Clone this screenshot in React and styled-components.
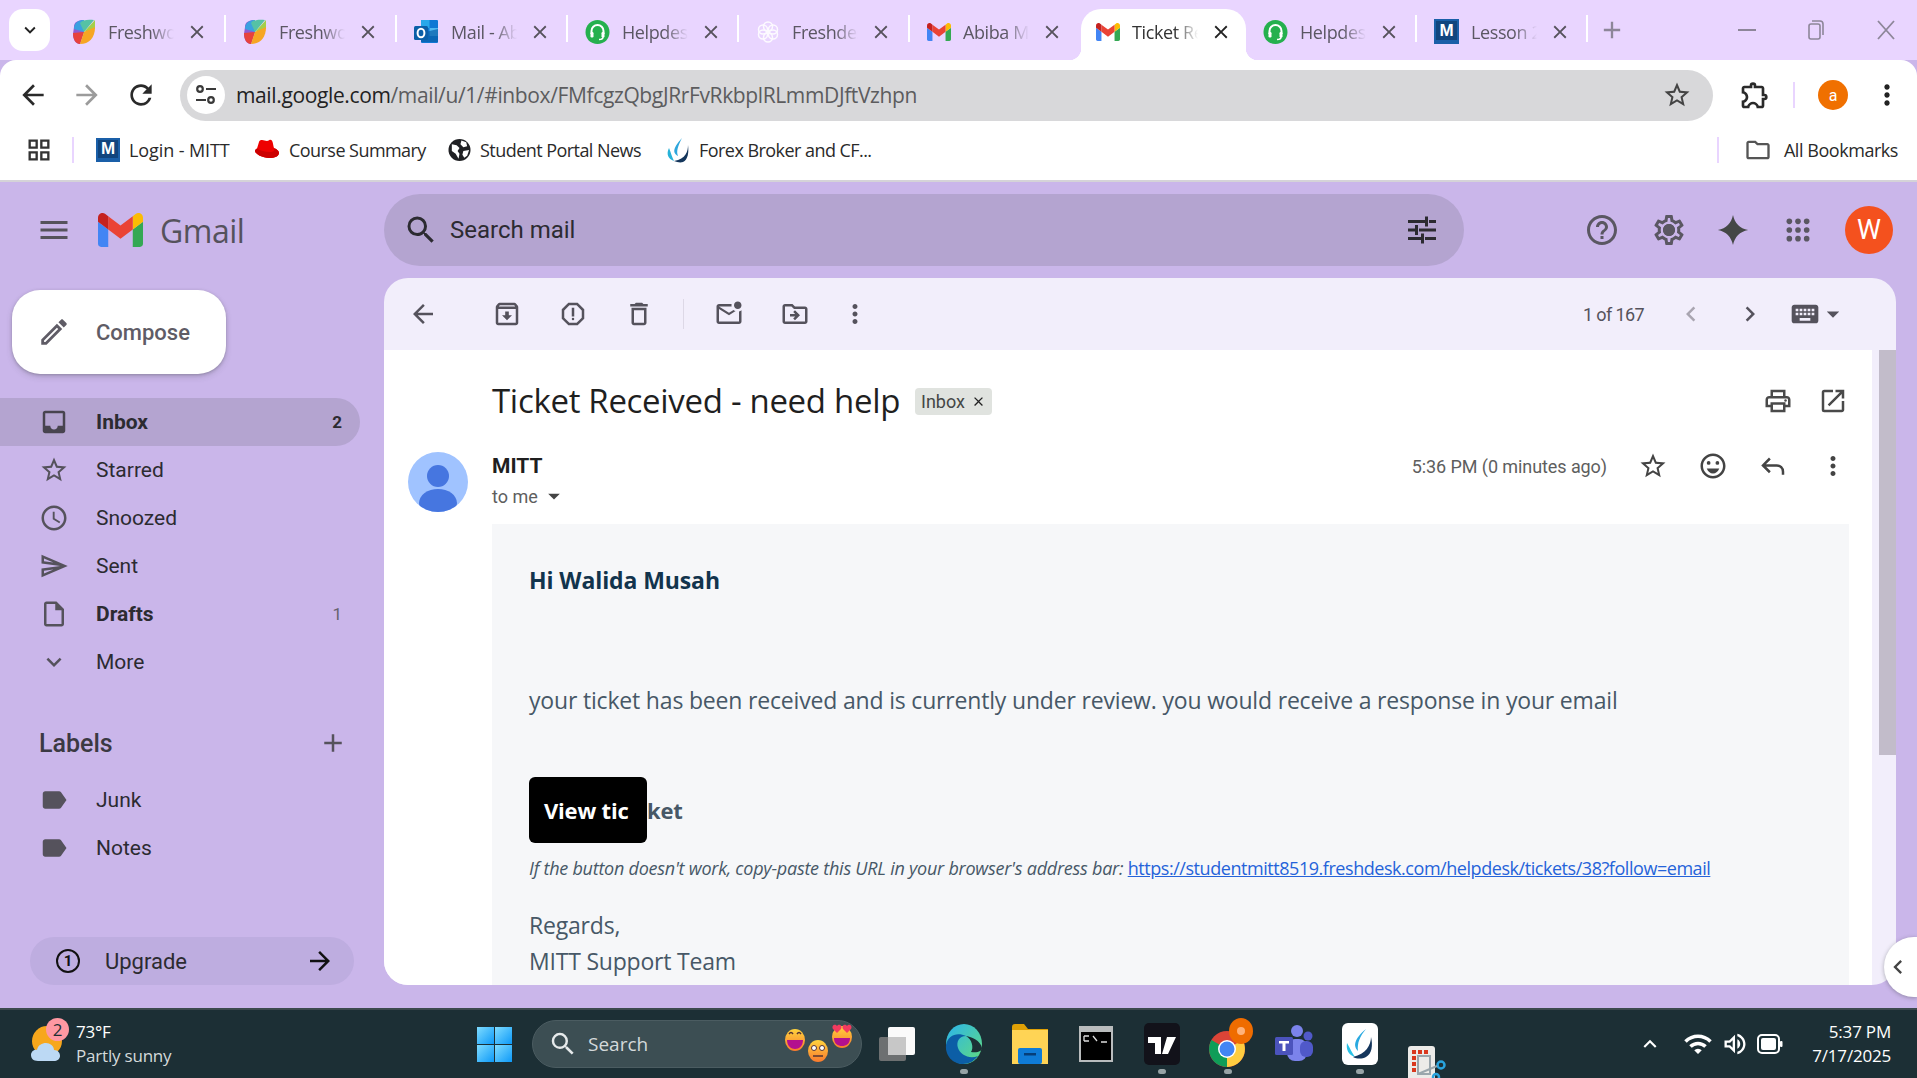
import React from "react";
import styled, { createGlobalStyle } from "styled-components";
import {
  MdMenu, MdSearch, MdHelpOutline, MdOutlineSettings, MdOutlineEdit, MdInbox, MdStarBorder,
  MdOutlineSchedule, MdOutlineSend, MdOutlineInsertDriveFile, MdExpandMore, MdAdd, MdLabel,
  MdArrowBack, MdArrowForward, MdOutlineArchive, MdOutlineReport, MdOutlineDelete,
  MdOutlineMarkEmailUnread, MdOutlineDriveFileMove, MdMoreVert, MdChevronLeft, MdChevronRight,
  MdKeyboard, MdArrowDropDown, MdOutlinePrint, MdOpenInNew, MdOutlineEmojiEmotions,
  MdClose, MdRefresh, MdOutlineExtension, MdOutlineFolder, MdOutlineGridView, MdExpandLess,
  MdWifi, MdOutlineVolumeUp,
} from "react-icons/md";

const Global = createGlobalStyle`
  html, body { margin: 0; padding: 0; height: 100%; overflow: hidden; background: #cab6ea; }
  body { font-family: Roboto, "Liberation Sans", sans-serif; }
  * { box-sizing: border-box; }
`;

const Page = styled.div`
  width: 1917px;
  height: 1078px;
  display: flex;
  flex-direction: column;
  overflow: hidden;
`;

/* chrome */
const TabStrip = styled.div`
  height: 60px;
  background: #e9d5ff;
  display: flex;
  padding-left: 9px;
  flex-shrink: 0;
`;
const TabSearch = styled.div`
  width: 41px;
  height: 42px;
  margin: 9px 5px 0 0;
  background: #fff;
  border-radius: 14px;
  display: flex;
  align-items: center;
  justify-content: center;
  font-size: 22px;
  color: #222;
`;
const Tab = styled.div`
  position: relative;
  width: ${(p) => (p.$active ? 165 : 171)}px;
  height: 51px;
  margin-top: 9px;
  padding-left: ${(p) => (p.$active ? 15 : 17)}px;
  display: flex;
  align-items: center;
  padding-bottom: 6px;
  background: ${(p) => (p.$active ? "#fff" : "transparent")};
  border-radius: 20px 20px 0 0;
  border-right: ${(p) => (p.$sep ? "2px solid #fff" : "0")};
  background-clip: padding-box;
  ${(p) => p.$sep && "border-image: linear-gradient(transparent 7px, #fff 7px, #fff 33px, transparent 33px) 1;"}
  ${(p) =>
    p.$active &&
    `
    &::before, &::after {
      content: "";
      position: absolute;
      bottom: 0;
      width: 12px;
      height: 12px;
    }
    &::before { left: -12px; background: radial-gradient(circle at 0 0, transparent 12px, #fff 12.5px); }
    &::after { right: -12px; background: radial-gradient(circle at 100% 0, transparent 12px, #fff 12.5px); }
  `}
`;
const TabTitle = styled.span`
  width: 66px;
  margin-left: 12px;
  overflow: hidden;
  white-space: nowrap;
  font-family: "Open Sans", sans-serif;
  font-size: 18px;
  letter-spacing: -0.4px;
  color: ${(p) => (p.$active ? "#333" : "#5b5763")};
  -webkit-mask-image: linear-gradient(to right, #000 65%, transparent);
  mask-image: linear-gradient(to right, #000 65%, transparent);
`;
const TabClose = styled.span`
  display: flex;
  margin-left: 12px;
  font-size: 22px;
  color: ${(p) => (p.$active ? "#222" : "#56525c")};
`;
const NewTab = styled.div`
  display: flex;
  align-items: center;
  height: 60px;
  padding: 0 0 0 10px;
  font-size: 28px;
  color: #8d8699;
`;
const WinControls = styled.div`
  margin-left: auto;
  display: flex;
  align-items: center;
  height: 60px;
  padding-right: 21px;
  gap: 52px;
  color: #8d8699;
`;
const ChromeBar = styled.div`
  height: 70px;
  background: #fff;
  border-radius: 16px 16px 0 0;
  display: flex;
  align-items: center;
  flex-shrink: 0;
  padding-left: 16px;
`;
const NavBtn = styled.div`
  width: 54px;
  display: flex;
  justify-content: flex-start;
  padding-left: 1px;
  font-size: 32px;
  color: ${(p) => (p.$off ? "#9b9b9b" : "#2a2a2a")};
`;
const AddressBar = styled.div`
  width: 1533px;
  height: 51px;
  margin: 0 0 0 2px;
  border-radius: 26px;
  background: #d8d8da;
  display: flex;
  align-items: center;
  padding: 0 21px 0 7px;
`;
const SiteInfo = styled.div`
  width: 38px;
  height: 38px;
  border-radius: 50%;
  background: #fff;
  display: flex;
  align-items: center;
  justify-content: center;
`;
const Url = styled.div`
  margin-left: 11px;
  font-family: "Open Sans", sans-serif;
  font-size: 21px;
  letter-spacing: -0.37px;
  color: #5c5c5e;
  & b {
    font-weight: 400;
    color: #222;
  }
`;
const BarStar = styled.div`
  margin-left: auto;
  display: flex;
  font-size: 30px;
  color: #444;
`;
const ProfileGroup = styled.div`
  display: flex;
  align-items: center;
  margin-left: 26px;
`;
const ChromeDivider = styled.div`
  width: 2px;
  height: ${(p) => p.$h || 24}px;
  background: #e9d5ff;
`;
const ProfileDot = styled.div`
  width: 30px;
  height: 30px;
  border-radius: 50%;
  background: #f07000;
  color: #fff;
  font-size: 16px;
  display: flex;
  align-items: center;
  justify-content: center;
`;
const Bookmarks = styled.div`
  height: 50px;
  background: #fff;
  display: flex;
  align-items: center;
  flex-shrink: 0;
  padding: 0 19px 11px 25px;
`;
const Bookmark = styled.div`
  width: ${(p) => p.$w}px;
  display: flex;
  align-items: center;
  gap: 9px;
  font-family: "Open Sans", sans-serif;
  font-size: 18px;
  letter-spacing: ${(p) => p.$ls || "-0.55px"};
  color: #2a2a2a;
  white-space: nowrap;
`;
const BookmarksEnd = styled.div`
  margin-left: auto;
  display: flex;
  align-items: center;
  gap: 12px;
  font-family: "Open Sans", sans-serif;
  font-size: 18px;
  letter-spacing: -0.45px;
  color: #2a2a2a;
`;
const MTile = styled.div`
  width: ${(p) => p.$s || 24}px;
  height: ${(p) => p.$s || 24}px;
  background: #11457e;
  border: 2px solid #1a5fa8;
  border-bottom-width: 4px;
  color: #fff;
  font-family: "Liberation Sans", sans-serif;
  font-weight: 700;
  font-size: 17px;
  line-height: 1;
  display: flex;
  align-items: center;
  justify-content: center;
  flex-shrink: 0;
`;

/* gmail */
const Gmail = styled.div`
  position: relative;
  flex: 1;
  min-height: 0;
  display: flex;
  background: #cab6ea;
  border-top: 2px solid #d5d3d8;
`;
const Sidebar = styled.aside`
  width: 384px;
  flex-shrink: 0;
  display: flex;
  flex-direction: column;
  padding-bottom: 23px;
`;
const Brand = styled.div`
  height: 96px;
  display: flex;
  align-items: center;
  padding-left: 36px;
  color: #55525c;
  font-size: 36px;
`;
const BrandName = styled.span`
  margin-left: 17px;
  font-family: "Open Sans", sans-serif;
  font-size: 32px;
  letter-spacing: -0.5px;
  color: #55525c;
`;
const Compose = styled.div`
  width: 214px;
  height: 84px;
  margin: 12px 0 0 12px;
  background: #fff;
  border-radius: 28px;
  box-shadow: 0 1px 3px rgba(60, 64, 67, 0.3), 0 3px 6px rgba(60, 64, 67, 0.18);
  display: flex;
  align-items: center;
  padding-left: 25px;
  font-size: 22px;
  font-weight: 500;
  color: #5f5c66;
  gap: 25px;
`;
const Nav = styled.nav`
  margin-top: 24px;
  display: flex;
  flex-direction: column;
`;
const NavRow = styled.div`
  width: 360px;
  height: 48px;
  display: flex;
  align-items: center;
  padding: 0 18px 0 39px;
  border-radius: 0 24px 24px 0;
  background: ${(p) => (p.$active ? "#b4a4d0" : "transparent")};
  font-size: 21px;
  font-weight: ${(p) => (p.$bold ? 700 : 400)};
  color: #2c2b31;
  gap: 27px;
  & svg {
    font-size: 30px;
    flex-shrink: 0;
    color: ${(p) => (p.$active ? "#48444f" : "#55525c")};
  }
`;
const Count = styled.span`
  margin-left: auto;
  font-size: 17px;
  font-weight: ${(p) => (p.$bold ? 700 : 400)};
  color: ${(p) => (p.$bold ? "#2c2b31" : "#66626e")};
`;
const LabelsHead = styled.div`
  height: 48px;
  margin: 33px 0 9px;
  padding: 0 12px 0 39px;
  width: 360px;
  display: flex;
  align-items: center;
  justify-content: space-between;
  font-size: 25px;
  font-weight: 500;
  color: #3b3943;
  & svg {
    font-size: 30px;
    color: #55525c;
  }
`;
const Upgrade = styled.div`
  margin: auto 0 0 30px;
  width: 324px;
  height: 48px;
  border-radius: 24px;
  background: #beade0;
  display: flex;
  align-items: center;
  padding: 0 19px 0 26px;
  font-size: 22px;
  color: #2c2b31;
  & > span {
    margin-left: 25px;
  }
  & > svg:last-child {
    margin-left: auto;
  }
`;
const UpgradeMark = styled.div`
  width: 24px;
  height: 24px;
  border: 2.5px solid #111;
  border-radius: 50%;
  font-size: 15px;
  font-weight: 700;
  color: #111;
  display: flex;
  align-items: center;
  justify-content: center;
`;
const Main = styled.main`
  flex: 1;
  min-width: 0;
  margin-right: 21px;
  padding: 12px 0 23px;
  display: flex;
  flex-direction: column;
`;
const TopRow = styled.div`
  height: 72px;
  display: flex;
  align-items: center;
  flex-shrink: 0;
`;
const SearchBox = styled.div`
  width: 1080px;
  height: 72px;
  border-radius: 36px;
  background: #b4a4d0;
  display: flex;
  align-items: center;
  padding: 0 27px 0 19px;
  font-size: 24px;
  color: #2c2b31;
  & > span {
    margin-left: 11px;
  }
`;
const TopIcons = styled.div`
  margin-left: auto;
  padding-right: 3px;
  display: flex;
  align-items: center;
  gap: 29px;
  color: #5a5762;
  font-size: 36px;
`;
const TopIconCell = styled.div`
  width: 36px;
  height: 36px;
  margin-left: ${(p) => p.$ml || 0}px;
  display: flex;
  align-items: center;
  justify-content: center;
  position: relative;
`;
const GearHub = styled.span`
  position: absolute;
  top: 12px;
  left: 12px;
  width: 12px;
  height: 12px;
  border-radius: 50%;
  background: #5a5762;
`;
const UserAvatar = styled.div`
  width: 48px;
  height: 48px;
  border-radius: 50%;
  background: #f4511e;
  color: #fff;
  font-size: 27px;
  display: flex;
  align-items: center;
  justify-content: center;
`;
const Panel = styled.section`
  flex: 1;
  min-height: 0;
  margin-top: 12px;
  border-radius: 24px;
  overflow: hidden;
  background: #f2eefb;
  display: flex;
  flex-direction: column;
`;
const PanelBar = styled.div`
  height: 72px;
  flex-shrink: 0;
  display: flex;
  align-items: center;
  padding: 0 48px 0 21px;
  color: #55525c;
`;
const BarIcon = styled.div`
  width: 36px;
  height: 36px;
  margin-left: ${(p) => p.$ml || 0}px;
  display: flex;
  align-items: center;
  justify-content: center;
  font-size: ${(p) => p.$size || 30}px;
  color: ${(p) => p.$color || "inherit"};
  flex-shrink: 0;
`;
const BarDivider = styled.div`
  width: 1px;
  height: 30px;
  margin-left: 26px;
  background: #ddd8e6;
`;
const Pager = styled.span`
  margin-left: auto;
  padding-right: 2px;
  font-size: 18px;
  letter-spacing: -0.6px;
  color: #55525c;
`;
const KeyboardPick = styled.div`
  display: flex;
  align-items: center;
  margin-left: 21px;
  & svg:first-child {
    font-size: 32px;
  }
  & svg:last-child {
    font-size: 30px;
    margin-left: -3px;
  }
`;
const PanelBody = styled.div`
  flex: 1;
  min-height: 0;
  display: flex;
`;
const Mail = styled.div`
  flex: 1;
  min-width: 0;
  background: #fff;
  display: flex;
  flex-direction: column;
  padding-top: 24px;
`;
const Gutter = styled.div`
  width: 24px;
  padding-left: 7px;
  flex-shrink: 0;
`;
const Thumb = styled.div`
  height: 405px;
  background: #c2bcca;
`;
const SubjectRow = styled.div`
  height: 54px;
  padding: 0 21px 0 108px;
  display: flex;
  align-items: center;
  flex-shrink: 0;
  color: #4a4a4a;
`;
const Subject = styled.h1`
  margin: -2px 0 0;
  font-family: "Open Sans", sans-serif;
  font-weight: 400;
  font-size: 33px;
  letter-spacing: -0.31px;
  color: #1f1f1f;
  white-space: nowrap;
`;
const Chip = styled.span`
  margin-left: 15px;
  height: 27px;
  padding: 0 6px;
  border-radius: 4px;
  background: #e0e3df;
  display: flex;
  align-items: center;
  gap: 6px;
  font-size: 18px;
  color: #444746;
  & svg {
    font-size: 15px;
    color: #222;
  }
`;
const SubjectTools = styled.div`
  margin-left: auto;
  display: flex;
  gap: 19px;
`;
const SenderRow = styled.div`
  margin-top: 24px;
  padding: 0 21px 0 24px;
  display: flex;
  align-items: flex-start;
  flex-shrink: 0;
`;
const PersonPic = styled.div`
  width: 60px;
  height: 60px;
  border-radius: 50%;
  overflow: hidden;
`;
const SenderInfo = styled.div`
  margin-left: 24px;
`;
const SenderName = styled.div`
  height: 28px;
  line-height: 28px;
  font-size: 21px;
  font-weight: 700;
  color: #1f1f1f;
`;
const ToMe = styled.div`
  margin-top: 1px;
  height: 30px;
  display: flex;
  align-items: center;
  font-size: 18px;
  color: #5e5e5e;
  & svg {
    font-size: 28px;
    margin-left: 2px;
    color: #444;
  }
`;
const SenderTools = styled.div`
  margin-left: auto;
  display: flex;
  align-items: center;
  height: 28px;
  color: #444;
  gap: 24px;
`;
const Timestamp = styled.span`
  font-size: 18px;
  letter-spacing: -0.08px;
  color: #5e5e5e;
  margin-right: 4px;
`;
const Message = styled.div`
  flex: 1;
  min-height: 0;
  overflow: hidden;
  margin: 12px 23px 0 108px;
  padding: 39px 0 0 37px;
  background: #f6f7f9;
  font-family: "Open Sans", sans-serif;
  color: #475867;
`;
const Greeting = styled.div`
  line-height: 34px;
  font-size: 23px;
  font-weight: 700;
  letter-spacing: -0.1px;
  color: #12344d;
`;
const Paragraph = styled.p`
  margin: 86px 0 0;
  line-height: 34px;
  font-size: 23px;
  letter-spacing: -0.18px;
  white-space: nowrap;
`;
const ButtonLine = styled.div`
  margin-top: 60px;
  display: flex;
  align-items: center;
  font-size: 22px;
  font-weight: 700;
  letter-spacing: -0.2px;
`;
const ViewButton = styled.div`
  width: 118px;
  height: 66px;
  padding-left: 15px;
  border-radius: 6px;
  background: #000;
  color: #fff;
  display: flex;
  align-items: center;
`;
const Fallback = styled.p`
  margin: 13px 0 0;
  line-height: 24px;
  font-size: 18px;
  font-style: italic;
  letter-spacing: -0.24px;
  white-space: nowrap;
  & a {
    font-style: normal;
    letter-spacing: -0.45px;
    color: #2563d9;
    text-decoration: underline;
  }
`;
const Signoff = styled.div`
  margin-top: 27px;
  line-height: 36px;
  font-size: 23px;
  letter-spacing: -0.2px;
`;
const SidePull = styled.div`
  position: absolute;
  top: 755px;
  right: 0;
  width: 33px;
  height: 60px;
  border-radius: 30px 0 0 30px;
  background: #fff;
  box-shadow: 0 1px 4px rgba(60, 64, 67, 0.4);
  display: flex;
  align-items: center;
  font-size: 28px;
  color: #444;
`;

/* windows taskbar */
const Taskbar = styled.footer`
  height: 70px;
  flex-shrink: 0;
  background: #1c2f35;
  border-top: 2px solid #3c4a4e;
  display: flex;
  align-items: center;
  padding-right: 26px;
  font-family: "Open Sans", sans-serif;
  color: #fff;
`;
const Weather = styled.div`
  position: relative;
  width: 477px;
  height: 68px;
  padding-left: 76px;
  display: flex;
  flex-direction: column;
  justify-content: center;
  font-size: 17px;
  line-height: 24px;
  letter-spacing: -0.2px;
  & span:last-child {
    color: #d4dadb;
  }
`;
const WeatherBadge = styled.div`
  position: absolute;
  top: 8px;
  left: 46px;
  width: 23px;
  height: 23px;
  border-radius: 50%;
  background: #ff98a2;
  color: #1c2f35;
  font-size: 17px;
  display: flex;
  align-items: center;
  justify-content: center;
`;
const WeatherPic = styled.div`
  position: absolute;
  top: 15px;
  left: 30px;
`;
const TaskSearch = styled.div`
  width: 330px;
  height: 48px;
  margin: 0 3px 0 20px;
  border-radius: 24px;
  background: #3c4e53;
  border: 1px solid #4b5c61;
  display: flex;
  align-items: center;
  padding: 0 7px 0 15px;
  font-size: 19px;
  color: #d4dadb;
  & > span {
    margin-left: 10px;
  }
  & > svg:last-child {
    margin-left: auto;
  }
`;
const TaskItem = styled.div`
  position: relative;
  width: 66px;
  height: 68px;
  display: flex;
  align-items: ${(p) => (p.$low ? "flex-end" : "center")};
  justify-content: center;
  ${(p) =>
    p.$running &&
    `
    &::after {
      content: "";
      position: absolute;
      bottom: 4px;
      left: 29px;
      width: 8px;
      height: 5px;
      border-radius: 3px;
      background: #97a3a6;
    }
  `}
`;
const Tray = styled.div`
  margin-left: auto;
  display: flex;
  align-items: center;
  color: #fff;
  gap: 8px;
`;
const Clock = styled.div`
  margin-left: 21px;
  text-align: right;
  font-size: 17px;
  line-height: 24px;
  letter-spacing: -0.2px;
`;

/* drawings */
const GmailLogo = ({ w = 45, h = 34 }) => (
  <svg width={w} height={h} viewBox="52 42 88 66" style={{ display: "block", flexShrink: 0 }}>
    <path fill="#4285f4" d="M58 108h14V74L52 59v43c0 3.32 2.69 6 6 6" />
    <path fill="#34a853" d="M120 108h14c3.32 0 6-2.69 6-6V59l-20 15" />
    <path fill="#fbbc04" d="M120 48v26l20-15v-8c0-7.42-8.47-11.65-14.4-7.2" />
    <path fill="#ea4335" d="M72 74V48l24 18 24-18v26L96 92" />
    <path fill="#c5221f" d="M52 51v8l20 15V48l-5.6-4.2c-5.94-4.45-14.4-.22-14.4 7.2" />
  </svg>
);
const FreshworksIcon = () => (
  <svg width="24" height="26" viewBox="0 0 24 26" style={{ flexShrink: 0 }}>
    <path fill="#8f5bd0" d="M2 8C2 3 6 1 12 1v12L8 25C4 25 1 21 1 15z" />
    <path fill="#e8423c" d="M1 14l11-1-4 12C4 25 1 21 1 14z" />
    <path fill="#3aa0e0" d="M12 1c-5 0-10 2-10 9l10 3z" />
    <path fill="#55c2a5" d="M22 1c-6-1-12 0-14 3l4 9z" />
    <path fill="#a3cf4a" d="M23 1L12 13l11-3z" />
    <path fill="#f6a623" d="M23 8L12 13 8 25c9 0 15-6 15-17z" />
  </svg>
);
const OutlookIcon = () => (
  <svg width="25" height="26" viewBox="0 0 25 26" style={{ flexShrink: 0 }}>
    <rect x="7" y="1" width="17" height="23" rx="1" fill="#0f78d4" />
    <rect x="7" y="1" width="8.5" height="8" fill="#28a8ea" />
    <rect x="15.5" y="9" width="8.5" height="8" fill="#50b8f0" />
    <path d="M7 14l17-4v13H7z" fill="#0a5ea8" opacity=".7" />
    <rect x="0" y="7" width="14" height="14" rx="1.5" fill="#0b5fa8" />
    <ellipse cx="7" cy="14" rx="3.4" ry="4.3" fill="none" stroke="#fff" strokeWidth="2" />
  </svg>
);
const HelpdeskIcon = () => (
  <svg width="25" height="26" viewBox="0 0 25 26" style={{ flexShrink: 0 }}>
    <path d="M12.5 1C19 1 24.500 6 24.500 13s-5 12-12 12S.5 20 .5 13 6 1 12.500 1z" fill="#25b04e" />
    <path d="M6.500 15v-3a6 6 0 0 1 12 0v3" fill="none" stroke="#fff" strokeWidth="2" />
    <rect x="5.500" y="13" width="3" height="5.500" rx="1.200" fill="#fff" />
    <rect x="16.500" y="13" width="3" height="5.500" rx="1.200" fill="#fff" />
    <path d="M18 18c0 2-2 2.500-4 2.500" fill="none" stroke="#fff" strokeWidth="1.500" />
  </svg>
);
const KnotIcon = () => (
  <svg width="24" height="26" viewBox="0 0 24 24" fill="none" stroke="#fff" strokeWidth="1.500" opacity=".9" style={{ flexShrink: 0 }}>
    <circle cx="12" cy="6.500" r="4.500" />
    <circle cx="12" cy="17.500" r="4.500" />
    <circle cx="7" cy="9.500" r="4.500" />
    <circle cx="17" cy="9.500" r="4.500" />
    <circle cx="7" cy="14.500" r="4.500" />
    <circle cx="17" cy="14.500" r="4.500" />
  </svg>
);
const RedHat = () => (
  <svg width="26" height="24" viewBox="0 0 26 24" style={{ flexShrink: 0 }}>
    <path d="M8 2c2 0 3 1 5 1s2-2 4-1c2 .5 2 5 3 8 2 1 5 2.500 5 5 0 3-4 5-10 5S1 16 1 13c0-1 1-2 2-2.500L5 4c.4-1.500 1.500-2 3-2z" fill="#e00" />
    <path d="M3 10.500c3 2 8 3.500 13 3.500 3 0 5-.7 4-4 2 1 5 2.500 5 5 0 3-4 5-10 5S1 16 1 13c0-1 1-2 2-2.500z" fill="#c00" />
  </svg>
);
const GlobeIcon = () => (
  <svg width="23" height="24" viewBox="0 0 24 24" style={{ flexShrink: 0 }}>
    <circle cx="12" cy="12" r="11.500" fill="#202124" />
    <path d="M4 6l5 1 3 3-2 3 2 3-1 5-3-5-4-3zM14 2l5 2 1 4-4 1-3-3zM16 13l6-1-2 6-3 2-2-3z" fill="#fff" />
  </svg>
);
const SwooshIcon = () => (
  <svg width="24" height="26" viewBox="0 0 24 26" style={{ flexShrink: 0 }}>
    <path d="M16 1C12 9 10 14 12 19 7 16 6 12 16 1z" fill="#2da6dc" />
    <path d="M3 11c-3 6-1 11 5 13-2-4-3-8-5-13z" fill="#27b2d8" />
    <path d="M22 8c0 6-2 14-14 16 3 1 6 2 9 1 5-2 6-10 5-17z" fill="#14365c" />
  </svg>
);
const DotsGrid = () => (
  <svg width="26" height="26" viewBox="0 0 24 24" fill="#5a5762">
    {[4, 12, 20].map((y) => [4, 12, 20].map((x) => <circle key={`${x}-${y}`} cx={x} cy={y} r="2.600" />))}
  </svg>
);
const Spark = () => (
  <svg width="34" height="34" viewBox="0 0 36 36">
    <path d="M18 2C20 11 25 16 34 18 25 20 20 25 18 34 16 25 11 20 2 18 11 16 16 11 18 2z" fill="#444746" />
  </svg>
);
const TuneIcon = () => (
  <svg width="30" height="30" viewBox="0 0 30 30" fill="#2c2b31">
    <path d="M1 5h17v3H1zM22 5h7v3h-7zM18 1.500h3v10h-3zM1 13.500h7v3H1zM12 13.500h17v3H12zM8 10h3v10H8zM1 22h13v3H1zM18 22h11v3H18zM14 18.500h3v10h-3z" />
  </svg>
);
const ReplyIcon = () => (
  <svg width="30" height="30" viewBox="0 0 24 24" fill="none" stroke="#444" strokeWidth="2">
    <path d="M9.500 6L4 11.500 9.500 17M4 11.500h11a5 5 0 0 1 5 5V19" />
  </svg>
);
const PersonAvatar = () => (
  <svg width="60" height="60" viewBox="0 0 60 60">
    <rect width="60" height="60" fill="#a0c3ff" />
    <circle cx="30" cy="24" r="11" fill="#4676e0" />
    <ellipse cx="30" cy="51" rx="19" ry="14" fill="#4676e0" />
  </svg>
);
const SiteTune = () => (
  <svg width="22" height="26" viewBox="0 0 22 26" fill="none" stroke="#3a3a3a" strokeWidth="2.200">
    <circle cx="5" cy="7" r="2.800" />
    <path d="M11 7h10M1 18h10" />
    <circle cx="16" cy="18" r="2.800" />
  </svg>
);
const WinLogo = () => (
  <svg width="35" height="35" viewBox="0 0 35 35" style={{ flexShrink: 0 }}>
    <defs>
      <linearGradient id="winG" x1="0" y1="0" x2="1" y2="1">
        <stop offset="0" stopColor="#7fdcff" />
        <stop offset="1" stopColor="#0d99f8" />
      </linearGradient>
    </defs>
    <rect width="17" height="17" fill="url(#winG)" />
    <rect x="18" width="17" height="17" fill="url(#winG)" />
    <rect y="18" width="17" height="17" fill="url(#winG)" />
    <rect x="18" y="18" width="17" height="17" fill="url(#winG)" />
  </svg>
);
const WeatherIcon = () => (
  <svg width="36" height="40" viewBox="0 0 36 40">
    <circle cx="17" cy="16" r="15" fill="#f7a71c" />
    <path d="M8 36c-5 0-7-3-7-6s3-6 6-5c1-5 5-7 9-7s8 3 8 7c4 0 6 3 6 6s-3 5-6 5z" fill="#bcd9f4" />
  </svg>
);
const Emojis = () => (
  <svg width="70" height="48" viewBox="0 0 70 48">
    <defs>
      <linearGradient id="emoG" x1="0" y1="0" x2="0" y2="1">
        <stop offset="0" stopColor="#ffd33d" />
        <stop offset="1" stopColor="#f97a2e" />
      </linearGradient>
    </defs>
    <ellipse cx="11" cy="20" rx="10" ry="11" fill="url(#emoG)" />
    <path d="M3 20h16c0 6-4 9-8 9s-8-3-8-9z" fill="#b3108e" />
    <path d="M5 14q2-3 4 0M13 14q2-3 4 0" stroke="#533" strokeWidth="1.500" fill="none" />
    <ellipse cx="34" cy="31" rx="10" ry="11" fill="url(#emoG)" />
    <circle cx="30" cy="28" r="2.500" fill="#fff" stroke="#533" />
    <circle cx="38" cy="28" r="2.500" fill="#fff" stroke="#533" />
    <path d="M29 36h10" stroke="#533" strokeWidth="1.500" />
    <ellipse cx="58" cy="17" rx="10" ry="11" fill="url(#emoG)" />
    <path d="M50 18h16c0 6-4 8-8 8s-8-2-8-8z" fill="#b3108e" />
    <path d="M53 13l-4-4c-2-3 2-6 4-3 2-3 6 0 4 3zM63 13l-4-4c-2-3 2-6 4-3 2-3 6 0 4 3z" fill="#f33a5f" />
  </svg>
);
const TaskView = () => (
  <svg width="38" height="34" viewBox="0 0 38 34">
    <rect x="9" y="0" width="27" height="28" rx="2" fill="#fafafa" />
    <rect x="0" y="10" width="27" height="24" rx="2" fill="#7b7b7b" fillOpacity=".85" />
    <rect x="9" y="10" width="18" height="18" fill="#c7c7c7" />
  </svg>
);
const EdgeIcon = () => (
  <svg width="38" height="42" viewBox="0 0 38 42">
    <defs>
      <linearGradient id="edgeA" x1="0" y1="0" x2="1" y2="1">
        <stop offset="0" stopColor="#2bb4ec" />
        <stop offset="1" stopColor="#62dc7c" />
      </linearGradient>
    </defs>
    <ellipse cx="19" cy="21" rx="18" ry="20" fill="url(#edgeA)" />
    <path d="M1 22C3 12 12 9 21 13c-7 0-10 6-8 12s11 12 20 8c-4 5-9 8-15 8C8 41 0 33 1 22z" fill="#0c5ea6" />
    <path d="M21 13c6 1 14 4 16 12 0 3-4 5-11 4 3-4 1-13-5-16z" fill="#1c2f35" />
  </svg>
);
const FolderIcon = () => (
  <svg width="36" height="40" viewBox="0 0 36 40">
    <path d="M0 3c0-2 1-3 3-3h9l4 5h20v35H0z" fill="#e0a106" />
    <rect y="6" width="36" height="34" fill="#ffd455" />
    <rect x="6" y="24" width="24" height="16" rx="2" fill="#0f7bd6" />
    <rect x="12" y="29" width="12" height="2.500" fill="#063e78" />
  </svg>
);
const CmdIcon = () => (
  <svg width="34" height="36" viewBox="0 0 34 36">
    <rect width="34" height="36" fill="#b9bcbd" />
    <rect x="2" y="6" width="30" height="28" fill="#000" />
    <path d="M5 10h5M5 10v5M5 15h5M14 10l4 5M22 16h6" stroke="#ddd" strokeWidth="1.300" />
  </svg>
);
const TradingView = () => (
  <svg width="36" height="42" viewBox="0 0 36 42">
    <rect width="36" height="42" rx="5" fill="#12121a" />
    <path d="M4 14h13v17h-6V20H4zM23 14h9l-8 17h-6z" fill="#fff" />
  </svg>
);
const ChromeIcon = () => (
  <svg width="50" height="52" viewBox="0 0 50 52" style={{ marginLeft: 11 }}>
    <g transform="translate(0 11)">
      <circle cx="18" cy="20" r="18" fill="#db4437" />
      <path d="M18 20L2.500 11A18 18 0 0 0 18 38z" fill="#0f9d58" />
      <path d="M18 20l0 18a18 18 0 0 0 15.500-27z" fill="#ffcd40" />
      <circle cx="18" cy="20" r="9" fill="#fff" />
      <circle cx="18" cy="20" r="7.500" fill="#4285f4" />
    </g>
    <ellipse cx="32" cy="13" rx="12" ry="13" fill="#ef6c00" />
    <circle cx="32" cy="13" r="4" fill="#ffb27a" />
  </svg>
);
const TeamsIcon = () => (
  <svg width="38" height="38" viewBox="0 0 38 38">
    <circle cx="22" cy="6" r="6" fill="#7b83eb" />
    <circle cx="33" cy="11" r="4.500" fill="#5059c9" />
    <rect x="12" y="14" width="20" height="22" rx="8" fill="#7b83eb" />
    <rect x="25" y="16" width="13" height="16" rx="6" fill="#5059c9" />
    <rect x="0" y="12" width="18" height="18" rx="1.500" fill="#4b53bc" />
    <path d="M4 16h10v2.500h-3.500V26h-3v-7.500H4z" fill="#fff" />
  </svg>
);
const FreshTile = () => (
  <svg width="36" height="42" viewBox="0 0 36 42">
    <rect width="36" height="42" rx="6" fill="#fff" />
    <path d="M24 6c-6 7-9 14-8 22-5-5-4-12 8-22z" fill="#29a9e0" />
    <path d="M5 20c-1 6 1 12 8 14-3-4-5-9-8-14z" fill="#29c2e6" />
    <path d="M29 14c0 8-5 17-18 20 4 2 9 2 13 0 6-3 7-12 5-20z" fill="#14365c" />
  </svg>
);
const SnipIcon = () => (
  <svg width="40" height="46" viewBox="0 0 40 46" style={{ marginBottom: -14, marginLeft: 4 }}>
    <rect width="27" height="46" rx="3" fill="#ecebe8" />
    <path d="M4 4h4v4H4zM10 4h4v4h-4zM16 4h4v4h-4zM4 10h4v4H4zM4 16h4v4H4zM4 22h4v4H4z" fill="#d9381e" />
    <path d="M10 10h12v18H10z" fill="none" stroke="#9aa6ac" strokeWidth="2" />
    <circle cx="33" cy="19" r="3.500" fill="none" stroke="#29a4de" strokeWidth="2.500" />
    <circle cx="28" cy="31" r="3" fill="none" stroke="#29a4de" strokeWidth="2.500" />
    <path d="M10 28l19-8" stroke="#9aa6ac" strokeWidth="2" />
  </svg>
);
const BatteryIcon = () => (
  <svg width="26" height="24" viewBox="0 0 26 24">
    <rect x="1" y="3" width="21" height="18" rx="4" fill="none" stroke="#fff" strokeWidth="2" />
    <rect x="4" y="6" width="15" height="12" rx="2" fill="#fff" />
    <rect x="23" y="9" width="2.500" height="6" rx="1" fill="#fff" />
  </svg>
);

const tabs = [
  { icon: <FreshworksIcon />, title: "Freshworks", sep: true },
  { icon: <FreshworksIcon />, title: "Freshworks", sep: true },
  { icon: <OutlookIcon />, title: "Mail - Abiba", sep: true },
  { icon: <HelpdeskIcon />, title: "Helpdesk", sep: true },
  { icon: <KnotIcon />, title: "Freshdesk", sep: true },
  { icon: <GmailLogo w={24} h={22} />, title: "Abiba Musah" },
  { icon: <GmailLogo w={24} h={22} />, title: "Ticket Received", active: true },
  { icon: <HelpdeskIcon />, title: "Helpdesk", sep: true },
  { icon: <MTile $s={25}>M</MTile>, title: "Lesson 2", sep: true },
];

const folders = [
  { name: "Inbox", icon: <MdInbox />, active: true, bold: true, count: "2", strong: true },
  { name: "Starred", icon: <MdStarBorder /> },
  { name: "Snoozed", icon: <MdOutlineSchedule /> },
  { name: "Sent", icon: <MdOutlineSend /> },
  { name: "Drafts", icon: <MdOutlineInsertDriveFile />, bold: true, count: "1" },
  { name: "More", icon: <MdExpandMore /> },
];

const App = () => {
  return (
    <Page>
      <Global />
      <TabStrip>
        <TabSearch><MdExpandMore /></TabSearch>
        {tabs.map((t, i) => (
          <Tab key={i} $active={t.active} $sep={t.sep}>
            {t.icon}
            <TabTitle $active={t.active}>{t.title}</TabTitle>
            <TabClose $active={t.active}><MdClose /></TabClose>
          </Tab>
        ))}
        <NewTab><MdAdd /></NewTab>
        <WinControls>
          <svg width="18" height="2"><rect width="18" height="2" fill="#8d8699" /></svg>
          <svg width="16" height="20" viewBox="0 0 16 20" fill="none" stroke="#8d8699" strokeWidth="1.600">
            <rect x="1" y="4" width="11" height="15" rx="2" />
            <path d="M4 1h8a3 3 0 0 1 3 3v11" />
          </svg>
          <svg width="20" height="20" stroke="#8d8699" strokeWidth="1.800"><path d="M2 1l16 18M18 1L2 19" /></svg>
        </WinControls>
      </TabStrip>
      <ChromeBar>
        <NavBtn><MdArrowBack /></NavBtn>
        <NavBtn $off><MdArrowForward /></NavBtn>
        <NavBtn><MdRefresh /></NavBtn>
        <AddressBar>
          <SiteInfo><SiteTune /></SiteInfo>
          <Url><b>mail.google.com</b>/mail/u/1/#inbox/FMfcgzQbgJRrFvRkbplRLmmDJftVzhpn</Url>
          <BarStar><MdStarBorder /></BarStar>
        </AddressBar>
        <ProfileGroup>
          <MdOutlineExtension size={32} color="#2a2a2a" />
          <ChromeDivider $h={26} style={{ marginLeft: 22 }} />
          <ProfileDot style={{ marginLeft: 23 }}>a</ProfileDot>
          <MdMoreVert size={32} color="#222" style={{ marginLeft: 23 }} />
        </ProfileGroup>
      </ChromeBar>
      <Bookmarks>
        <MdOutlineGridView size={28} color="#333" />
        <ChromeDivider $h={26} style={{ margin: "0 22px 0 19px" }} />
        <Bookmark $w={158} $ls="-0.1px"><MTile>M</MTile>Login - MITT</Bookmark>
        <Bookmark $w={194}><RedHat />Course Summary</Bookmark>
        <Bookmark $w={218}><GlobeIcon />Student Portal News</Bookmark>
        <Bookmark $w={210}><SwooshIcon />Forex Broker and CF...</Bookmark>
        <BookmarksEnd>
          <ChromeDivider $h={26} style={{ marginRight: 13 }} />
          <MdOutlineFolder size={28} color="#555" />
          All Bookmarks
        </BookmarksEnd>
      </Bookmarks>

      <Gmail>
        <Sidebar>
          <Brand>
            <MdMenu />
            <span style={{ marginLeft: 26 }} />
            <GmailLogo />
            <BrandName>Gmail</BrandName>
          </Brand>
          <Compose><MdOutlineEdit size={34} />Compose</Compose>
          <Nav>
            {folders.map((f) => (
              <NavRow key={f.name} $active={f.active} $bold={f.bold}>
                {f.icon}
                {f.name}
                {f.count && <Count $bold={f.strong}>{f.count}</Count>}
              </NavRow>
            ))}
          </Nav>
          <LabelsHead>Labels<MdAdd /></LabelsHead>
          <NavRow><MdLabel />Junk</NavRow>
          <NavRow><MdLabel />Notes</NavRow>
          <Upgrade>
            <UpgradeMark>1</UpgradeMark>
            <span>Upgrade</span>
            <MdArrowForward size={30} color="#111" />
          </Upgrade>
        </Sidebar>

        <Main>
          <TopRow>
            <SearchBox>
              <MdSearch size={36} color="#2c2b31" />
              <span>Search mail</span>
              <BarStar><TuneIcon /></BarStar>
            </SearchBox>
            <TopIcons>
              <TopIconCell><MdHelpOutline /></TopIconCell>
              <TopIconCell $ml={2}>
                <MdOutlineSettings size={38} />
                <GearHub />
              </TopIconCell>
              <TopIconCell $ml={-1}><Spark /></TopIconCell>
              <TopIconCell><DotsGrid /></TopIconCell>
              <UserAvatar>W</UserAvatar>
            </TopIcons>
          </TopRow>
          <Panel>
            <PanelBar>
              <BarIcon><MdArrowBack /></BarIcon>
              <BarIcon $ml={48}><MdOutlineArchive /></BarIcon>
              <BarIcon $ml={30}><MdOutlineReport /></BarIcon>
              <BarIcon $ml={30}><MdOutlineDelete /></BarIcon>
              <BarDivider />
              <BarIcon $ml={27}><MdOutlineMarkEmailUnread /></BarIcon>
              <BarIcon $ml={30}><MdOutlineDriveFileMove /></BarIcon>
              <BarIcon $ml={24}><MdMoreVert /></BarIcon>
              <Pager>1 of 167</Pager>
              <BarIcon $ml={27} $color="#a9a5b0"><MdChevronLeft /></BarIcon>
              <BarIcon $ml={23}><MdChevronRight /></BarIcon>
              <KeyboardPick>
                <MdKeyboard />
                <MdArrowDropDown />
              </KeyboardPick>
            </PanelBar>
            <PanelBody>
              <Mail>
                <SubjectRow>
                  <Subject>Ticket Received - need help</Subject>
                  <Chip>Inbox<MdClose /></Chip>
                  <SubjectTools>
                    <BarIcon><MdOutlinePrint /></BarIcon>
                    <BarIcon><MdOpenInNew /></BarIcon>
                  </SubjectTools>
                </SubjectRow>
                <SenderRow>
                  <PersonPic><PersonAvatar /></PersonPic>
                  <SenderInfo>
                    <SenderName>MITT</SenderName>
                    <ToMe>to me<MdArrowDropDown /></ToMe>
                  </SenderInfo>
                  <SenderTools>
                    <Timestamp>5:36 PM (0 minutes ago)</Timestamp>
                    <BarIcon><MdStarBorder /></BarIcon>
                    <BarIcon><MdOutlineEmojiEmotions /></BarIcon>
                    <BarIcon><ReplyIcon /></BarIcon>
                    <BarIcon><MdMoreVert /></BarIcon>
                  </SenderTools>
                </SenderRow>
                <Message>
                  <Greeting>Hi Walida Musah</Greeting>
                  <Paragraph>your ticket has been received and is currently under review. you would receive a response in your email</Paragraph>
                  <ButtonLine>
                    <ViewButton>View tic</ViewButton>ket
                  </ButtonLine>
                  <Fallback>
                    If the button doesn't work, copy-paste this URL in your browser's address bar:{" "}
                    <a href="#ticket">https://studentmitt8519.freshdesk.com/helpdesk/tickets/38?follow=email</a>
                  </Fallback>
                  <Signoff>Regards,<br />MITT Support Team</Signoff>
                </Message>
              </Mail>
              <Gutter><Thumb /></Gutter>
            </PanelBody>
          </Panel>
        </Main>
        <SidePull><MdChevronLeft /></SidePull>
      </Gmail>

      <Taskbar>
        <Weather>
          <WeatherPic><WeatherIcon /></WeatherPic>
          <WeatherBadge>2</WeatherBadge>
          <span>73°F</span>
          <span>Partly sunny</span>
        </Weather>
        <WinLogo />
        <TaskSearch>
          <MdSearch size={30} color="#e6eaeb" />
          <span>Search</span>
          <Emojis />
        </TaskSearch>
        <TaskItem><TaskView /></TaskItem>
        <TaskItem $running><EdgeIcon /></TaskItem>
        <TaskItem><FolderIcon /></TaskItem>
        <TaskItem><CmdIcon /></TaskItem>
        <TaskItem $running><TradingView /></TaskItem>
        <TaskItem $running><ChromeIcon /></TaskItem>
        <TaskItem><TeamsIcon /></TaskItem>
        <TaskItem $running><FreshTile /></TaskItem>
        <TaskItem $low><SnipIcon /></TaskItem>
        <Tray>
          <MdExpandLess size={26} />
          <MdWifi size={30} style={{ marginLeft: 12 }} />
          <MdOutlineVolumeUp size={28} />
          <BatteryIcon />
          <Clock>5:37 PM<br />7/17/2025</Clock>
        </Tray>
      </Taskbar>
    </Page>
  );
};

export default App;
